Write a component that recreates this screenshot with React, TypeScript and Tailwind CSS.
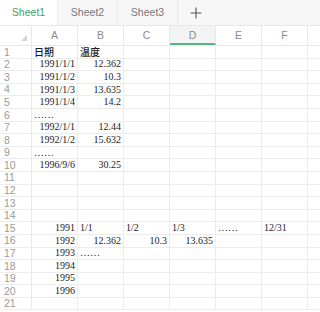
type Cell = { t: string; r?: boolean; cjk?: boolean };

const cols = ["A", "B", "C", "D", "E", "F", ""];

// 每一列的資料，索引對應 A..F
const rows: Record<number, (Cell | null)[]> = {
  1: [{ t: "日期", cjk: true }, { t: "温度", cjk: true }],
  2: [{ t: "1991/1/1", r: true }, { t: "12.362", r: true }],
  3: [{ t: "1991/1/2", r: true }, { t: "10.3", r: true }],
  4: [{ t: "1991/1/3", r: true }, { t: "13.635", r: true }],
  5: [{ t: "1991/1/4", r: true }, { t: "14.2", r: true }],
  6: [{ t: "……" }],
  7: [{ t: "1992/1/1", r: true }, { t: "12.44", r: true }],
  8: [{ t: "1992/1/2", r: true }, { t: "15.632", r: true }],
  9: [{ t: "……" }],
  10: [{ t: "1996/9/6", r: true }, { t: "30.25", r: true }],
  15: [
    { t: "1991", r: true },
    { t: "1/1" },
    { t: "1/2" },
    { t: "1/3" },
    { t: "……" },
    { t: "12/31" },
  ],
  16: [
    { t: "1992", r: true },
    { t: "12.362", r: true },
    { t: "10.3", r: true },
    { t: "13.635", r: true },
  ],
  17: [{ t: "1993", r: true }, { t: "……" }],
  18: [{ t: "1994", r: true }],
  19: [{ t: "1995", r: true }],
  20: [{ t: "1996", r: true }],
};

const tabs = ["Sheet1", "Sheet2", "Sheet3"];

export default function App() {
  return (
    <div className="w-[320px] h-[312px] overflow-hidden bg-white font-['Liberation_Sans',Arial,sans-serif]">
      {/* 工作表分頁 */}
      <div className="flex h-[26px] bg-[#f7f7f7] border-b border-[#e8e8e8]">
        {tabs.map((name, i) => (
          <div
            key={name}
            className={`flex items-center justify-center text-[10.5px] border-r border-[#ebebeb] ${
              i === 0 ? "bg-white text-[#3f9f62] w-[58px]" : "text-[#777] w-[60px]"
            }`}
          >
            {name}
          </div>
        ))}
        <div className="w-[36px] flex items-center justify-center">
          <svg width="12" height="12" viewBox="0 0 12 12">
            <path d="M6 0.5v11M0.5 6h11" stroke="#555" strokeWidth="1.1" />
          </svg>
        </div>
      </div>

      {/* 欄標題 */}
      <div className="flex h-[20px] border-b border-[#e8e8e8]">
        <div className="w-[32px] shrink-0 border-r border-[#e8e8e8] relative">
          <div className="absolute right-[4px] bottom-[4px] w-0 h-0 border-l-[6px] border-l-transparent border-b-[6px] border-b-[#d4d4d4]" />
        </div>
        {cols.map((c) => (
          <div
            key={c || "g"}
            className={`w-[46px] shrink-0 border-r border-[#e8e8e8] flex items-center justify-center text-[10.5px] text-[#8a8a8a] ${
              c === "D" ? "bg-[#f2f3f4] border-b-2 border-b-[#58b57c] pt-[2px]" : ""
            }`}
          >
            {c}
          </div>
        ))}
      </div>

      {/* 資料列 */}
      {Array.from({ length: 21 }, (_, k) => k + 1).map((n) => {
        const data = rows[n] || [];
        return (
          <div key={n} className="flex h-[12.6px] border-b border-[#ececec]">
            <div className="w-[32px] shrink-0 border-r border-[#e8e8e8] pl-[4px] flex items-center text-[10.5px] leading-none text-[#9a9a9a]">
              {n}
            </div>
            {cols.map((c, ci) => {
              const cell = data[ci];
              return (
                <div
                  key={c || "g"}
                  className={`w-[46px] shrink-0 border-r border-[#ececec] flex items-center px-[2px] whitespace-nowrap overflow-visible text-[10px] leading-none text-[#1c1c1c] ${
                    cell?.r ? "justify-end" : "justify-start"
                  } ${
                    cell?.cjk
                      ? "font-['Noto_Sans_CJK_SC',sans-serif] font-medium"
                      : "font-['Liberation_Serif','Times_New_Roman',serif]"
                  }`}
                >
                  {cell?.t}
                </div>
              );
            })}
          </div>
        );
      })}
    </div>
  );
}
